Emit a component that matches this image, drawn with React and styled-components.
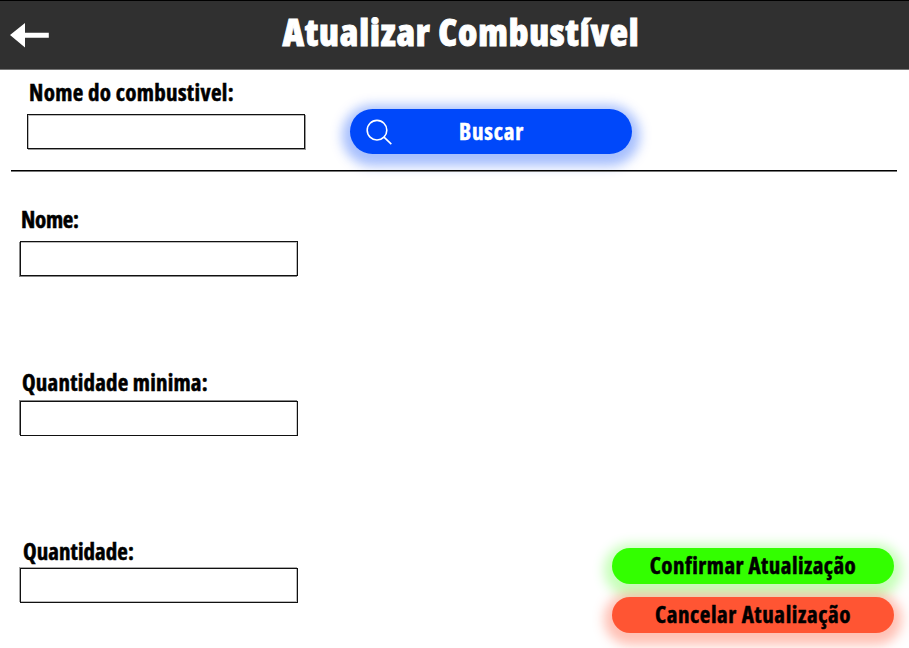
import React from "react";
import styled, { createGlobalStyle } from "styled-components";

const GlobalStyle = createGlobalStyle`
  * { box-sizing: border-box; }
  body { margin: 0; background: #fff; color: #000; font-family: "Open Sans", "Liberation Sans", sans-serif; overflow: hidden; }
`;

const Page = styled.main`
  width: 909px;
  height: 648px;
  display: flex;
  flex-direction: column;
`;

const Header = styled.header`
  height: 70px;
  display: grid;
  grid-template-columns: 60px 1fr 47px;
  background: #303030;
  border-top: 1px solid #000;
  border-bottom: 1px solid #757575;
`;

const BackButton = styled.button`
  display: flex;
  align-items: flex-start;
  padding: 21px 0 0 9px;
  border: 0;
  background: none;
`;

const Title = styled.h1`
  margin: 12px 0 0;
  color: #fff;
  font-size: 37.5px;
  line-height: 38px;
  font-weight: 800;
  font-stretch: 75%;
  letter-spacing: 0.85px;
  text-align: center;
  white-space: nowrap;
  -webkit-text-stroke: 0.9px #fff;
`;

const SearchBar = styled.form`
  height: 100px;
  display: flex;
  padding: 10px 0 0 27px;
`;

const SearchField = styled.div`
  width: 323px;
`;

const Divider = styled.hr`
  width: 886px;
  height: 2px;
  margin: 0 0 0 11px;
  border: 0;
  border-top: 1px solid #000;
  background: #777;
  flex: none;
`;

const Label = styled.label`
  display: block;
  height: 24px;
  margin: 0 0 ${p => p.$gap}px ${p => p.$indent}px;
  font-size: 23px;
  line-height: 24px;
  font-weight: 700;
  font-stretch: 75%;
  letter-spacing: ${p => p.$track || 0}px;
  white-space: nowrap;
  -webkit-text-stroke: 0.5px currentColor;
`;

const Input = styled.input`
  display: block;
  width: 278px;
  height: 35px;
  padding: 0 8px;
  border: 1px solid #111;
  border-radius: 0;
  outline: 0;
  background: #fff;
  font: inherit;
  box-shadow: ${p => p.$edge};
`;

const Body = styled.div`
  flex: 1;
  display: flex;
  justify-content: space-between;
  padding: 0 15px 15px 20px;
`;

const Fields = styled.div`
  padding-top: 35px;
`;

const Field = styled.div`
  height: ${p => p.$height}px;
`;

const Actions = styled.div`
  display: flex;
  flex-direction: column;
  justify-content: flex-end;
  gap: 13px;
`;

const Pill = styled.button`
  width: 282px;
  height: ${p => p.$height}px;
  display: grid;
  grid-template-columns: ${p => (p.$icon ? "58px 167px 57px" : "1fr")};
  justify-items: center;
  align-items: center;
  padding: 0;
  border: 0;
  border-radius: 23px;
  color: ${p => p.$ink || "#000"};
  background: ${p => p.$color};
  box-shadow: 0 4px 12px 8px ${p => p.$glow};
  font-family: inherit;
  font-size: 23px;
  line-height: 24px;
  font-weight: 700;
  font-stretch: 75%;
  letter-spacing: ${p => p.$track || 0}px;
  white-space: nowrap;
  -webkit-text-stroke: 0.5px currentColor;
`;

const SearchPill = styled(Pill)`
  margin-top: 29px;
`;

const PillText = styled.span`
  padding-bottom: 2px;
`;

function ArrowIcon() {
  return (
    <svg width="42" height="28" viewBox="9 22 42 28" aria-hidden="true">
      <path fill="#fff" d="M10 35.1 25 23v9.7h23.8v5H25v9.7z" />
    </svg>
  );
}

function SearchIcon() {
  return (
    <svg width="28" height="28" viewBox="0 0 28 28" fill="none" stroke="#fff" strokeWidth="1.6" aria-hidden="true">
      <circle cx="12" cy="12.2" r="9.8" />
      <path d="m19 19.2 7.3 7" />
    </svg>
  );
}

export default function App() {
  return (
    <Page>
      <GlobalStyle />
      <Header>
        <BackButton type="button" aria-label="Voltar"><ArrowIcon /></BackButton>
        <Title>Atualizar Combustível</Title>
      </Header>
      <SearchBar>
        <SearchField>
          <Label htmlFor="busca" $indent={2} $gap={10} $track={0.32}>Nome do combustivel:</Label>
          <Input id="busca" $edge="inset 1px 1px #bbb, 1px 1px #999" />
        </SearchField>
        <SearchPill type="button" $icon $height={45} $track={0.8} $color="#0048fa" $ink="#fff" $glow="rgba(0,72,250,.35)">
          <SearchIcon />
          <PillText>Buscar</PillText>
        </SearchPill>
      </SearchBar>
      <Divider />
      <Body>
        <Fields>
          <Field $height={163}>
            <Label htmlFor="nome" $indent={1} $gap={10} $track={-0.3}>Nome:</Label>
            <Input id="nome" $edge="inset -1px 1px #bbb, -1px 1px #888" />
          </Field>
          <Field $height={169}>
            <Label htmlFor="minima" $indent={2} $gap={7} $track={0.2}>Quantidade minima:</Label>
            <Input id="minima" $edge="inset -1px 0 #ccc, -1px -1px #888" />
          </Field>
          <Field $height={70}>
            <Label htmlFor="quantidade" $indent={3} $gap={5} $track={0.05}>Quantidade:</Label>
            <Input id="quantidade" $edge="inset -1px -1px #bbb, -1px -1px #aaa" />
          </Field>
        </Fields>
        <Actions>
          <Pill type="button" $height={36} $track={0.45} $color="#33ff00" $glow="rgba(51,255,0,.28)"><PillText>Confirmar Atualização</PillText></Pill>
          <Pill type="button" $height={36} $track={0.6} $color="#ff5533" $glow="rgba(255,85,51,.37)"><PillText>Cancelar Atualização</PillText></Pill>
        </Actions>
      </Body>
    </Page>
  );
}
